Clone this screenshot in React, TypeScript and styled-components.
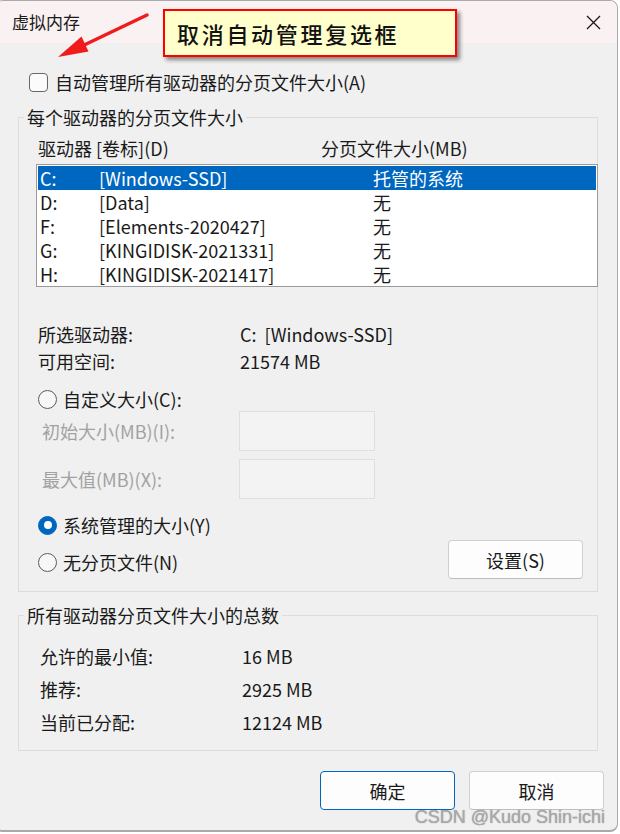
import styled, { createGlobalStyle } from 'styled-components';

const GlobalStyle = createGlobalStyle`
  html, body {
    margin: 0;
    padding: 0;
    background: #ffffff;
  }
  body {
    font-family: 'Noto Sans CJK SC', 'Noto Sans', sans-serif;
  }
`;

const Page = styled.div`
  position: relative;
  width: 620px;
  height: 834px;
  overflow: hidden;
`;

const Window = styled.div`
  box-sizing: border-box;
  margin-left: -5px;
  width: 623px;
  height: 832px;
  background: #f0f0f0;
  border: 1px solid #a9a9a9;
  border-bottom-width: 2px;
  border-radius: 8px;
  overflow: hidden;
  color: #1a1a1a;
  font-size: 18px;
`;

const TitleBar = styled.div`
  height: 42px;
  background: #f9f1f2;
  display: flex;
  align-items: center;
  justify-content: space-between;
  padding: 0 16px 0 16px;
`;

const Title = styled.span`
  font-size: 17px;
  line-height: 20px;
`;

const Body = styled.div`
  padding-left: 4px;
`;

const CheckRow = styled.label`
  display: flex;
  align-items: center;
  gap: 7px;
  height: 19px;
  margin: 30px 0 0 29px;
  line-height: 19px;
`;

const CheckBox = styled.span`
  box-sizing: border-box;
  width: 19px;
  height: 19px;
  border: 1px solid #676767;
  border-radius: 4px;
  background: #fbfbfb;
`;

const Group = styled.fieldset<{ $top: number }>`
  box-sizing: border-box;
  width: 580px;
  margin: ${(p) => p.$top}px 0 0 18px;
  padding: 0;
  min-width: 0;
  border: 1px solid #dcdcdc;
`;

const Legend = styled.legend`
  margin-left: 5px;
  padding: 0 3px;
  font-size: 18px;
  line-height: 24px;
`;

const GroupInner = styled.div<{ $pad: string }>`
  padding: ${(p) => p.$pad};
`;

const HeaderRow = styled.div`
  display: grid;
  grid-template-columns: 283px 1fr;
  padding-left: 2px;
  line-height: 24px;
`;

const DriveList = styled.div`
  box-sizing: border-box;
  margin: 4px -1px 0 0;
  height: 123px;
  padding: 1px;
  background: #ffffff;
  border: 1px solid #9a9a9a;
`;

const DriveRow = styled.div<{ $selected?: boolean }>`
  display: grid;
  grid-template-columns: 59px 274px 1fr;
  height: 24px;
  line-height: 24px;
  padding-left: 2px;
  background: ${(p) => (p.$selected ? '#0067c0' : 'transparent')};
  color: ${(p) => (p.$selected ? '#ffffff' : '#1a1a1a')};
`;

const InfoGrid = styled.div<{ $top: number; $row: number; $label: number; $left: number }>`
  display: grid;
  grid-template-columns: ${(p) => p.$label}px 1fr;
  grid-auto-rows: ${(p) => p.$row}px;
  align-items: center;
  margin-top: ${(p) => p.$top}px;
  padding-left: ${(p) => p.$left}px;
`;

const RadioRow = styled.label<{ $top: number; $shift?: number }>`
  display: flex;
  align-items: center;
  gap: 6px;
  height: 24px;
  margin-top: ${(p) => p.$top}px;
  padding-left: 2px;
  padding-top: ${(p) => p.$shift ?? 0}px;
`;

const Radio = styled.span<{ $checked?: boolean }>`
  box-sizing: border-box;
  display: flex;
  align-items: center;
  justify-content: center;
  width: 19px;
  height: 19px;
  border-radius: 50%;
  border: 1px solid ${(p) => (p.$checked ? '#0067c0' : '#5c5c5c')};
  background: ${(p) => (p.$checked ? '#0067c0' : '#f7f7f7')};

  &::after {
    content: '';
    display: ${(p) => (p.$checked ? 'block' : 'none')};
    width: 8px;
    height: 8px;
    border-radius: 50%;
    background: #ffffff;
  }
`;

const FieldRow = styled.div<{ $top: number }>`
  display: flex;
  align-items: center;
  height: 40px;
  margin-top: ${(p) => p.$top}px;
  padding-left: 6px;
`;

const FieldLabel = styled.span`
  width: 197px;
  color: #a2a2a2;
`;

const DisabledInput = styled.span`
  box-sizing: border-box;
  width: 136px;
  height: 40px;
  background: #f3f3f3;
  border: 1px solid #dfdfdf;
`;

const BottomRow = styled.div`
  display: flex;
  align-items: center;
  justify-content: space-between;
  margin-top: 3px;
  padding-right: 14px;
`;

const Button = styled.button<{ $primary?: boolean }>`
  box-sizing: border-box;
  width: 135px;
  height: 39px;
  padding: 0;
  font-family: inherit;
  font-size: 18px;
  color: #1a1a1a;
  background: #fdfdfd;
  border: 1px solid ${(p) => (p.$primary ? '#0067c0' : '#d0d0d0')};
  border-bottom-color: ${(p) => (p.$primary ? '#0067c0' : '#bdbdbd')};
  border-radius: 4px;
`;

const Footer = styled.div`
  display: flex;
  justify-content: flex-end;
  gap: 14px;
  margin-top: 20px;
  padding-right: 13px;
`;

const Callout = styled.div`
  position: absolute;
  left: 163px;
  top: 9px;
  box-sizing: border-box;
  width: 294px;
  height: 48px;
  display: flex;
  align-items: center;
  padding-left: 12px;
  background: #ffffcc;
  border: 2px solid #ff0000;
  box-shadow: 3px 3px 4px rgba(0, 0, 0, 0.45);
  font-size: 22px;
  font-weight: 500;
  letter-spacing: 2.7px;
  color: #111111;
`;

const ArrowLayer = styled.svg`
  position: absolute;
  left: 0;
  top: 0;
`;

const Watermark = styled.div`
  position: absolute;
  right: 15px;
  top: 807px;
  font-family: 'Liberation Sans', Arial, sans-serif;
  font-size: 18px;
  line-height: 20px;
  color: #a9a9a9;
  text-shadow: 0 0 1px rgba(70, 70, 70, 0.5);
  white-space: nowrap;
`;

const drives = [
  { letter: 'C:', label: '[Windows-SSD]', size: '托管的系统', selected: true },
  { letter: 'D:', label: '[Data]', size: '无' },
  { letter: 'F:', label: '[Elements-2020427]', size: '无' },
  { letter: 'G:', label: '[KINGIDISK-2021331]', size: '无' },
  { letter: 'H:', label: '[KINGIDISK-2021417]', size: '无' },
];

const CloseIcon = () => (
  <svg width="15" height="15" viewBox="0 0 15 15">
    <path d="M1 1 L14 14 M14 1 L1 14" stroke="#1a1a1a" strokeWidth="1.3" fill="none" />
  </svg>
);

export default function App() {
  return (
    <Page>
      <GlobalStyle />
      <Window>
        <TitleBar>
          <Title>虚拟内存</Title>
          <CloseIcon />
        </TitleBar>
        <Body>
          <CheckRow>
            <CheckBox />
            <span>自动管理所有驱动器的分页文件大小(A)</span>
          </CheckRow>

          <Group $top={13}>
            <Legend>每个驱动器的分页文件大小</Legend>
            <GroupInner $pad="7px 0 12px 17px">
              <HeaderRow>
                <span>驱动器 [卷标](D)</span>
                <span>分页文件大小(MB)</span>
              </HeaderRow>
              <DriveList>
                {drives.map((d) => (
                  <DriveRow key={d.letter} $selected={d.selected}>
                    <span>{d.letter}</span>
                    <span>{d.label}</span>
                    <span>{d.size}</span>
                  </DriveRow>
                ))}
              </DriveList>

              <InfoGrid $top={33} $row={27} $label={202} $left={2}>
                <span>所选驱动器:</span>
                <span>C:&nbsp;&nbsp;[Windows-SSD]</span>
                <span>可用空间:</span>
                <span>21574 MB</span>
              </InfoGrid>

              <RadioRow $top={13}>
                <Radio />
                <span>自定义大小(C):</span>
              </RadioRow>
              <FieldRow $top={0}>
                <FieldLabel>初始大小(MB)(I):</FieldLabel>
                <DisabledInput />
              </FieldRow>
              <FieldRow $top={8}>
                <FieldLabel>最大值(MB)(X):</FieldLabel>
                <DisabledInput />
              </FieldRow>

              <RadioRow $top={14}>
                <Radio $checked />
                <span>系统管理的大小(Y)</span>
              </RadioRow>
              <BottomRow>
                <RadioRow $top={0} $shift={5}>
                  <Radio />
                  <span>无分页文件(N)</span>
                </RadioRow>
                <Button>设置(S)</Button>
              </BottomRow>
            </GroupInner>
          </Group>

          <Group $top={11}>
            <Legend>所有驱动器分页文件大小的总数</Legend>
            <GroupInner $pad="12.5px 0 11.5px 21px">
              <InfoGrid $top={0} $row={33} $label={202} $left={0}>
                <span>允许的最小值:</span>
                <span>16 MB</span>
                <span>推荐:</span>
                <span>2925 MB</span>
                <span>当前已分配:</span>
                <span>12124 MB</span>
              </InfoGrid>
            </GroupInner>
          </Group>

          <Footer>
            <Button $primary>确定</Button>
            <Button>取消</Button>
          </Footer>
        </Body>
      </Window>

      <ArrowLayer width="170" height="70" viewBox="0 0 170 70">
        <line x1="147" y1="15" x2="80" y2="47" stroke="#f01c1c" strokeWidth="3.5" strokeLinecap="round" />
        <polygon points="58,57 88.5,51.5 81.5,36.5" fill="#f01c1c" />
      </ArrowLayer>
      <Callout>取消自动管理复选框</Callout>
      <Watermark>CSDN @Kudo Shin-ichi</Watermark>
    </Page>
  );
}
